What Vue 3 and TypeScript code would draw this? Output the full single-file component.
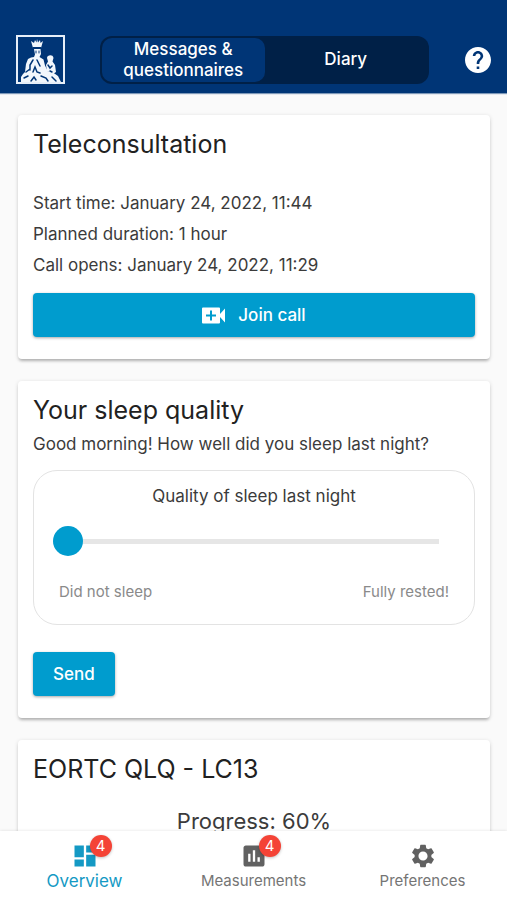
<script setup lang="ts">
import { ref } from 'vue'

type View = 'messages' | 'diary'
type IconName = 'dashboard' | 'chart' | 'gear'

interface Tab {
  label: string
  icon: IconName
  badge?: number
}

const view = ref<View>('messages')
const activeTab = ref('Overview')
const sleepQuality = ref(0)

const callDetails: string[] = [
  'Start time: January 24, 2022, 11:44',
  'Planned duration: 1 hour',
  'Call opens: January 24, 2022, 11:29',
]

const tabs: Tab[] = [
  { label: 'Overview', icon: 'dashboard', badge: 4 },
  { label: 'Measurements', icon: 'chart', badge: 4 },
  { label: 'Preferences', icon: 'gear' },
]

const icons: Record<IconName, string> = {
  dashboard: 'M3 13h8V3H3v10zm0 8h8v-6H3v6zm10 0h8V11h-8v10zm0-18v6h8V3h-8z',
  chart:
    'M19 3H5c-1.1 0-2 .9-2 2v14c0 1.1.9 2 2 2h14c1.1 0 2-.9 2-2V5c0-1.1-.9-2-2-2zM9 17H7v-7h2v7zm4 0h-2V7h2v10zm4 0h-2v-4h2v4z',
  gear: 'M19.14 12.94c.04-.3.06-.61.06-.94 0-.32-.02-.64-.07-.94l2.03-1.58c.18-.14.23-.41.12-.61l-1.92-3.32c-.12-.22-.37-.29-.59-.22l-2.39.96c-.5-.38-1.03-.7-1.62-.94l-.36-2.54c-.04-.24-.24-.41-.48-.41h-3.84c-.24 0-.43.17-.47.41l-.36 2.54c-.59.24-1.13.57-1.62.94l-2.39-.96c-.22-.08-.47 0-.59.22L2.74 8.87c-.12.21-.08.47.12.61l2.03 1.58c-.05.3-.09.63-.09.94s.02.64.07.94l-2.03 1.58c-.18.14-.23.41-.12.61l1.92 3.32c.12.22.37.29.59.22l2.39-.96c.5.38 1.03.7 1.62.94l.36 2.54c.05.24.24.41.48.41h3.84c.24 0 .44-.17.47-.41l.36-2.54c.59-.24 1.13-.56 1.62-.94l2.39.96c.22.08.47 0 .59-.22l1.92-3.32c.12-.22.07-.47-.12-.61l-2.01-1.58zM12 15.9c-2.15 0-3.9-1.75-3.9-3.9s1.75-3.9 3.9-3.9 3.9 1.75 3.9 3.9-1.75 3.9-3.9 3.9z',
}
</script>

<template>
  <div class="app">
    <header class="topbar">
      <svg class="logo" viewBox="0 0 49 49" aria-hidden="true">
        <rect x="1" y="1" width="47" height="47" fill="none" stroke="#e6eef8" stroke-width="2" />
        <g fill="#f2f7fc">
          <path d="M15 6l3 2 1-3 1.500 2.500L21 4l1 3.500L24 5l.5 3L27 6l-2 7h-8z" />
          <path d="M18 14h6.500l.5 5-1.500 3 4 2.500 1.500 6 3 6 5 1 5 3.500 3 6H5v-5l2-3 2-2 1-8 2-5 3-1.500 3-.5 1-2.500z" />
          <path d="M31 23c0-3 6-4 6.500 0l-1 3.500 2.500 3.500 1 7-3 2-6-3-1-6 2-3.500z" />
        </g>
        <g fill="none" stroke="#003576" stroke-linecap="round">
          <path d="M17 12.500h8M20 16v2M23 16v2" stroke-width="1" />
          <path d="M17 25l-3 5v5M21 25l3 6M10 37l4-3" stroke-width="1.500" />
          <path d="M17 37l2-5 2 5 3 1M32 30l2 3 2-2M34 36l2 1" stroke-width="1.500" />
          <path d="M8 43l4-2M15 46l3-4 2 3M25 41l5 2 2 3M36 42l4 4" stroke-width="1.500" />
        </g>
      </svg>
      <nav class="switch" aria-label="Overview sections">
        <button type="button" :class="{ on: view === 'messages' }" @click="view = 'messages'">
          Messages &amp; questionnaires
        </button>
        <button type="button" :class="{ on: view === 'diary' }" @click="view = 'diary'">Diary</button>
      </nav>
      <button class="help" type="button" aria-label="Help">
        <svg viewBox="2 2 20 20">
          <path fill="#fff" d="M12 2C6.480 2 2 6.480 2 12s4.480 10 10 10 10-4.480 10-10S17.520 2 12 2zm1 17h-2v-2h2v2zm2.070-7.750l-.9.920C13.450 12.900 13 13.500 13 15h-2v-.5c0-1.100.450-2.100 1.170-2.830l1.240-1.260c.370-.360.590-.860.590-1.410 0-1.100-.9-2-2-2s-2 .9-2 2H8c0-2.210 1.790-4 4-4s4 1.790 4 4c0 .880-.360 1.680-.930 2.250z" />
        </svg>
      </button>
    </header>

    <main class="content">
      <section class="card">
        <h2>Teleconsultation</h2>
        <div class="details">
          <p v-for="line in callDetails" :key="line">{{ line }}</p>
        </div>
        <button class="primary wide" type="button">
          <svg viewBox="0 0 24 17" aria-hidden="true">
            <path fill="#fff" fill-rule="evenodd" d="M1 .5h16q1 0 1 1V7l5-5.500v14L18 10v5.500q0 1-1 1H1q-1 0-1-1v-14q0-1 1-1zM8 3.500v4H4v2h4v4h2v-4h4v-2h-4v-4z" />
          </svg>
          Join call
        </button>
      </section>

      <section class="card">
        <h2>Your sleep quality</h2>
        <p class="question">Good morning! How well did you sleep last night?</p>
        <div class="rating">
          <label for="sleep">Quality of sleep last night</label>
          <input id="sleep" v-model.number="sleepQuality" type="range" min="0" max="100" />
          <div class="ends">
            <span>Did not sleep</span>
            <span>Fully rested!</span>
          </div>
        </div>
        <button class="primary" type="button">Send</button>
      </section>

      <section class="card">
        <h2>EORTC QLQ - LC13</h2>
        <p class="progress">Progress: 60%</p>
      </section>
    </main>

    <nav class="tabs" aria-label="Main">
      <button
        v-for="tab in tabs"
        :key="tab.label"
        type="button"
        :class="{ active: activeTab === tab.label }"
        @click="activeTab = tab.label"
      >
        <span class="icon">
          <svg viewBox="0 0 24 24" aria-hidden="true"><path fill="currentColor" :d="icons[tab.icon]" /></svg>
          <span v-if="tab.badge" class="badge">{{ tab.badge }}</span>
        </span>
        <span>{{ tab.label }}</span>
      </button>
    </nav>
  </div>
</template>

<style>
body {
  margin: 0;
}
</style>

<style scoped>
.app {
  height: 100vh;
  display: flex;
  flex-direction: column;
  background: #fafafa;
  color: #3b3b3b;
  font-family: Inter, 'Liberation Sans', sans-serif;
  font-size: 17px;
}

button {
  font: inherit;
  color: inherit;
  border: 0;
  padding: 0;
  background: none;
  cursor: pointer;
}

h2,
p {
  margin: 0;
}

.topbar {
  flex: none;
  display: flex;
  align-items: center;
  padding: 35px 16px 9px;
  background: #003576;
  color: #fff;
  box-shadow: 0 1px 1px rgba(0, 53, 118, 0.5);
}

.logo {
  flex: none;
  width: 49px;
  height: 49px;
}

.switch {
  flex: 1;
  display: grid;
  grid-template-columns: 1fr 1fr;
  margin: 0 36px 0 35px;
  padding: 2px;
  border-radius: 12px;
  background: #002047;
}

.switch button {
  height: 44px;
  padding: 0 12px;
  border-radius: 10px;
  line-height: 21px;
  font-weight: 500;
}

.switch .on {
  background: #003576;
}

.help {
  flex: none;
  width: 26px;
  height: 26px;
}

.help svg {
  display: block;
}

.content {
  flex: 1;
  min-height: 0;
  overflow: auto;
  scrollbar-width: none;
  display: flex;
  flex-direction: column;
  gap: 22px;
  padding: 22px 17px 22px 18px;
}

.card {
  flex: none;
  padding: 13px 15px 22px;
  border-radius: 4px;
  background: #fff;
  box-shadow:
    0 3px 3px -1px rgba(0, 0, 0, 0.22),
    0 1px 4px rgba(0, 0, 0, 0.14);
}

h2 {
  color: #212121;
  font-size: 25px;
  line-height: 32px;
  font-weight: 400;
}

.details {
  margin: 28px 0 12px;
  line-height: 31px;
}

.primary {
  display: flex;
  align-items: center;
  justify-content: center;
  gap: 12px;
  height: 44px;
  padding: 0 20px;
  border-radius: 4px;
  background: #009cce;
  color: #fff;
  font-weight: 500;
  box-shadow: 0 1px 3px rgba(0, 0, 0, 0.35);
}

.primary svg {
  width: 24px;
  height: 17px;
}

.wide {
  width: 100%;
}

.question {
  line-height: 36px;
}

.rating {
  margin: 8px 0 27px;
  padding: 12px 25px 20px;
  border: 1px solid #e3e3e3;
  border-radius: 24px;
}

.rating label {
  display: block;
  line-height: 26px;
  text-align: center;
}

.rating input {
  appearance: none;
  display: block;
  width: calc(100% - 4px);
  height: 30px;
  margin: 17px 0 24px -6px;
  background: linear-gradient(#e6e6e6, #e6e6e6) center / 100% 5px no-repeat;
}

.rating input::-webkit-slider-thumb {
  appearance: none;
  width: 30px;
  height: 30px;
  border-radius: 50%;
  background: #009cce;
}

.ends {
  display: flex;
  justify-content: space-between;
  color: #8a8a8a;
  font-size: 15px;
  line-height: 24px;
}

.progress {
  margin-top: 20px;
  font-size: 22px;
  line-height: 32px;
  text-align: center;
}

.tabs {
  flex: none;
  position: relative;
  display: grid;
  grid-template-columns: repeat(3, 1fr);
  background: #fff;
  box-shadow: 0 0 3px rgba(0, 0, 0, 0.12);
}

.tabs button {
  display: flex;
  flex-direction: column;
  align-items: center;
  padding: 11px 0 8px;
  color: #757575;
  font-size: 15px;
  line-height: 22px;
}

.tabs .active {
  color: #1499c4;
  font-size: 17px;
}

.icon {
  position: relative;
  width: 28px;
  height: 28px;
  color: #616161;
}

.active .icon {
  color: #1499c4;
}

.icon svg {
  display: block;
}

.badge {
  position: absolute;
  top: -7px;
  left: 19px;
  width: 22px;
  height: 22px;
  border-radius: 50%;
  background: #f44336;
  color: #fff;
  font-size: 15px;
  line-height: 22px;
  text-align: center;
  box-shadow: 0 1px 3px rgba(0, 0, 0, 0.25);
}
</style>
